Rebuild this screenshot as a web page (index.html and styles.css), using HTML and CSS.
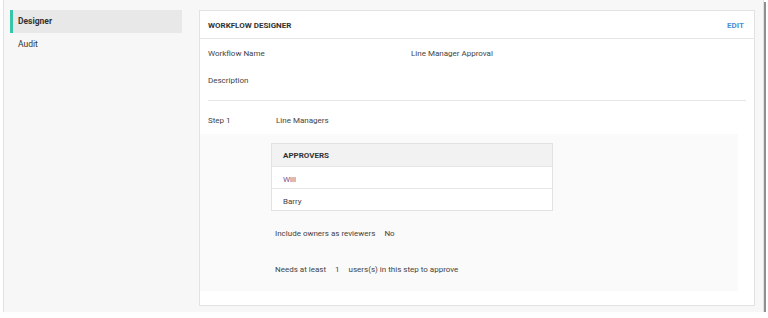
FILE: index.html
```html
<!DOCTYPE html>
<html lang="en">
<head>
  <meta charset="UTF-8">
  <meta name="viewport" content="width=device-width, initial-scale=1.0">
  <title>Workflow Designer</title>
  <link rel="stylesheet" href="styles.css">
</head>
<body>
  <div class="frame">
    <div class="sidebar">
      <div class="nav-item active">Designer</div>
      <div class="nav-item">Audit</div>
    </div>
    <div class="card">
      <div class="card-header">
        <span class="card-title">WORKFLOW DESIGNER</span>
        <a class="edit" href="#">EDIT</a>
      </div>
      <div class="card-body">
        <div class="field">
          <span class="label">Workflow Name</span>
          <span class="value">Line Manager Approval</span>
        </div>
        <div class="field">
          <span class="label">Description</span>
        </div>
      </div>
      <div class="step">
        <span class="step-label">Step 1</span>
        <span>Line Managers</span>
      </div>
      <div class="step-detail">
        <div class="approvers">
          <div class="approvers-head">APPROVERS</div>
          <div class="approver visited">Will</div>
          <div class="approver">Barry</div>
        </div>
        <p class="option">Include owners as reviewers<span class="gap">No</span></p>
        <p class="option needs">Needs at least<span class="gap">1</span><span class="gap">users(s) in this step to approve</span></p>
      </div>
    </div>
  </div>
</body>
</html>
```

FILE: styles.css
```css
body {
  margin: 0;
  background: #fff;
  font-family: Roboto, "Liberation Sans", sans-serif;
  font-size: 8px;
  color: #444;
}
.frame {
  display: flex;
  margin-left: 3px;
  width: 759px;
  height: 302px;
  padding-top: 10px;
  background: #f7f7f7;
  border-left: 1px solid #e2e2e2;
  border-right: 1px solid #e2e2e2;
  box-shadow: 2px 2px 0 #8f8f8f;
}
.sidebar {
  width: 172px;
  margin-left: 6px;
  font-size: 8.5px;
}
.nav-item {
  height: 24px;
  line-height: 23px;
  padding-left: 8px;
  color: #333;
}
.nav-item.active {
  background: #e8e8e8;
  border-left: 3px solid #35c6aa;
  padding-left: 5px;
  font-weight: bold;
  height: 23px;
}
.card {
  margin-left: 17px;
  width: 554px;
  height: 294px;
  background: #fff;
  border: 1px solid #e2e2e2;
}
.card-header {
  display: flex;
  justify-content: space-between;
  align-items: center;
  height: 26px;
  padding: 1px 10px 0 8px;
  border-bottom: 1px solid #e6e6e6;
}
.card-title {
  font-weight: bold;
  font-size: 8px;
  color: #333;
}
.edit {
  font-weight: bold;
  font-size: 8px;
  color: #4a8fd4;
  text-decoration: none;
}
.card-body {
  margin: 0 8px;
  padding: 1px 0 7px;
  border-bottom: 1px solid #e6e6e6;
}
.field {
  display: flex;
  height: 27px;
  line-height: 27px;
}
.field + .field {
  height: 26px;
}
.label {
  width: 203px;
}
.step {
  display: flex;
  padding: 13px 8px 7px;
  line-height: 13px;
}
.step-label {
  width: 68px;
}
.step-detail {
  margin-right: 16px;
  padding: 9px 0 15px 71px;
  background: #fafafa;
}
.approvers {
  width: 280px;
  border: 1px solid #e2e2e2;
  background: #fff;
}
.approvers-head {
  height: 22px;
  line-height: 23px;
  padding: 0 11px;
  font-weight: bold;
  color: #333;
  background: #f2f2f2;
}
.approver {
  height: 21px;
  line-height: 26px;
  padding: 0 11px;
  border-top: 1px solid #e6e6e6;
}
.approver.visited {
  color: #7b4f86;
}
.option {
  margin: 16px 0 0 4px;
  line-height: 13px;
}
.option.needs {
  margin-top: 23px;
}
.gap {
  margin-left: 9px;
}
```
